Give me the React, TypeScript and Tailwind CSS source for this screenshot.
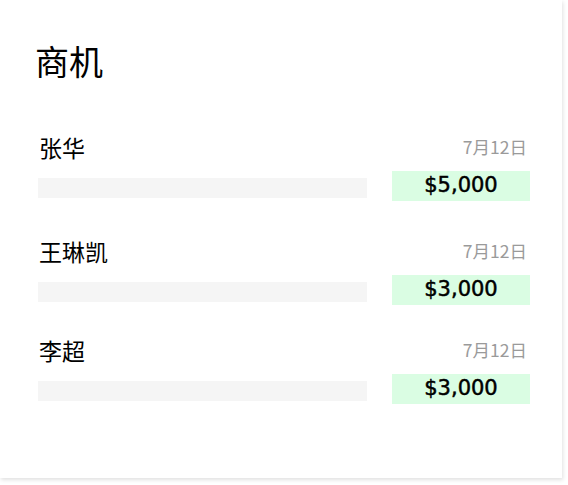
import React from 'react';

const deals = [
  { name: '张华', date: '7月12日', amount: '$5,000', mt: 'mt-[50px]' },
  { name: '王琳凯', date: '7月12日', amount: '$3,000', mt: 'mt-[35px]' },
  { name: '李超', date: '7月12日', amount: '$3,000', mt: 'mt-[30px]' },
];

const cjk = "font-['Noto_Sans_CJK_SC','Noto_Sans',sans-serif]";

const App: React.FC = () => {
  return (
    <div className="w-[568px] h-[485px] bg-white">
      <div className={`w-[562px] h-[478px] bg-white shadow-[1px_2px_4px_rgba(0,0,0,0.12)] pl-[38px] pr-[32px] pt-[40px] ${cjk}`}>
        <h1 className="text-[34px] leading-[42px] text-black -ml-[3px]">商机</h1>
        {deals.map((d, i) => (
          <div key={i} className={d.mt}>
            <div className="flex items-center justify-between">
              <span className="text-[23px] leading-[30px] text-black ml-[1px]">{d.name}</span>
              <span className="text-[17.5px] leading-[30px] text-[#9a9a9a] mr-[3px]">{d.date}</span>
            </div>
            <div className="flex items-start gap-[25px] mt-[9px]">
              <div className="flex-1 h-[20px] mt-[7px] bg-[#f5f5f5]"></div>
              <div className="w-[138px] h-[30px] bg-[#dafde3] flex items-center justify-center">
                <span className="font-['DejaVu_Sans',sans-serif] text-[21px] text-black [-webkit-text-stroke:0.5px_black]">{d.amount}</span>
              </div>
            </div>
          </div>
        ))}
      </div>
    </div>
  );
};

export default App;
